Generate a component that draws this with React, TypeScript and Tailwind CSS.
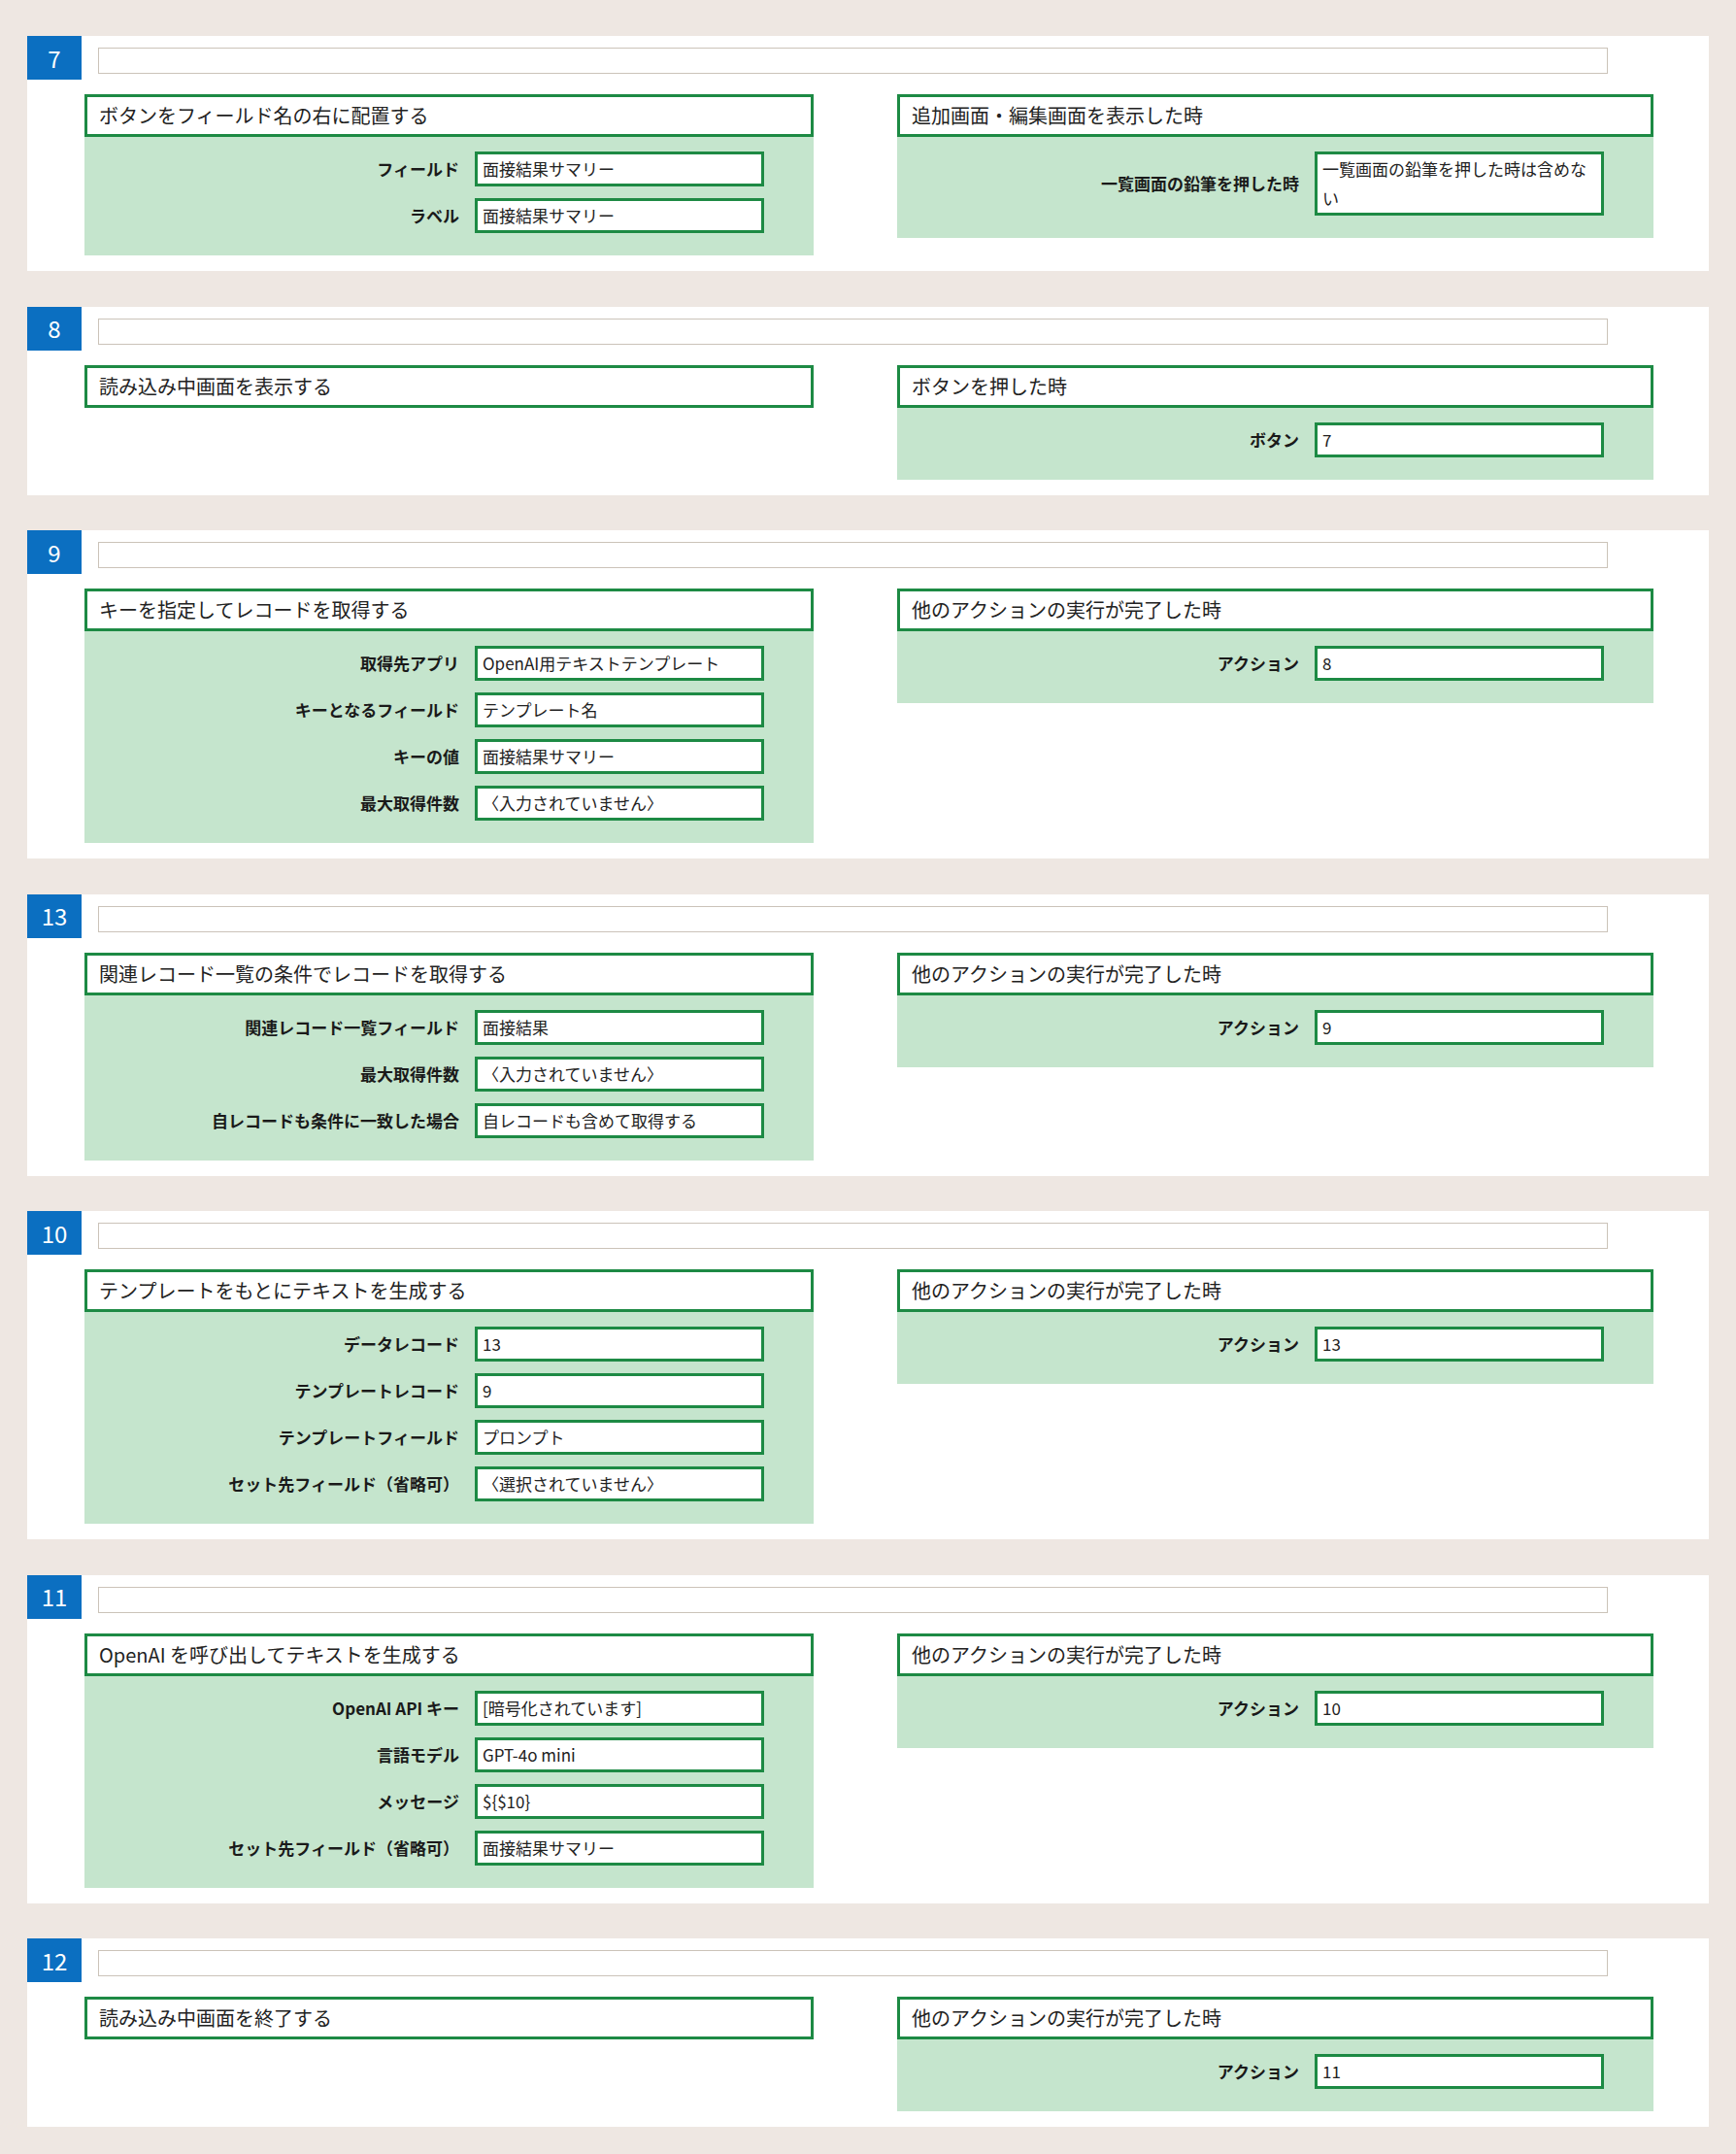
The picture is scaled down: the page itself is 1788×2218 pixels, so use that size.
import React from "react";

type Row = [string, string];
type Col = { title: string; rows: Row[] };
type Card = { n: string; left: Col; right: Col };

const cards: Card[] = [
  {
    n: "7",
    left: {
      title: "ボタンをフィールド名の右に配置する",
      rows: [
        ["フィールド", "面接結果サマリー"],
        ["ラベル", "面接結果サマリー"],
      ],
    },
    right: {
      title: "追加画面・編集画面を表示した時",
      rows: [["一覧画面の鉛筆を押した時", "一覧画面の鉛筆を押した時は含めない"]],
    },
  },
  {
    n: "8",
    left: { title: "読み込み中画面を表示する", rows: [] },
    right: { title: "ボタンを押した時", rows: [["ボタン", "7"]] },
  },
  {
    n: "9",
    left: {
      title: "キーを指定してレコードを取得する",
      rows: [
        ["取得先アプリ", "OpenAI用テキストテンプレート"],
        ["キーとなるフィールド", "テンプレート名"],
        ["キーの値", "面接結果サマリー"],
        ["最大取得件数", "〈入力されていません〉"],
      ],
    },
    right: { title: "他のアクションの実行が完了した時", rows: [["アクション", "8"]] },
  },
  {
    n: "13",
    left: {
      title: "関連レコード一覧の条件でレコードを取得する",
      rows: [
        ["関連レコード一覧フィールド", "面接結果"],
        ["最大取得件数", "〈入力されていません〉"],
        ["自レコードも条件に一致した場合", "自レコードも含めて取得する"],
      ],
    },
    right: { title: "他のアクションの実行が完了した時", rows: [["アクション", "9"]] },
  },
  {
    n: "10",
    left: {
      title: "テンプレートをもとにテキストを生成する",
      rows: [
        ["データレコード", "13"],
        ["テンプレートレコード", "9"],
        ["テンプレートフィールド", "プロンプト"],
        ["セット先フィールド（省略可）", "〈選択されていません〉"],
      ],
    },
    right: { title: "他のアクションの実行が完了した時", rows: [["アクション", "13"]] },
  },
  {
    n: "11",
    left: {
      title: "OpenAI を呼び出してテキストを生成する",
      rows: [
        ["OpenAI API キー", "[暗号化されています]"],
        ["言語モデル", "GPT-4o mini"],
        ["メッセージ", "${$10}"],
        ["セット先フィールド（省略可）", "面接結果サマリー"],
      ],
    },
    right: { title: "他のアクションの実行が完了した時", rows: [["アクション", "10"]] },
  },
  {
    n: "12",
    left: { title: "読み込み中画面を終了する", rows: [] },
    right: { title: "他のアクションの実行が完了した時", rows: [["アクション", "11"]] },
  },
];

function Column({ col, width }: { col: Col; width: string }) {
  return (
    <div className={`${width} flex flex-col`}>
      <div className="flex h-[44px] items-center border-[3px] border-[#1d8a44] bg-white pl-[12px] text-[20px] text-[#222]">
        {col.title}
      </div>
      {col.rows.length > 0 && (
        <div className="flex flex-col gap-[12px] bg-[#c5e5cd] pt-[15px] pb-[23px]">
          {col.rows.map(([label, value], i) => (
            <div key={i} className="flex items-center justify-end pr-[51px]">
              <div className="mr-[16px] text-right text-[17px] font-bold text-[#1a1a1a]">{label}</div>
              <div className="w-[298px] shrink-0 border-[3px] border-[#1d8a44] bg-white px-[5px] text-[17px] leading-[30px] text-[#222]">
                {value}
              </div>
            </div>
          ))}
        </div>
      )}
    </div>
  );
}

export default function App() {
  return (
    <div
      className="min-h-[2218px] w-[1788px] bg-[#eee7e2] px-[28px] pt-[37px] pb-[25px]"
      style={{ fontFamily: '"Noto Sans CJK JP", "Noto Sans", sans-serif' }}
    >
      <div className="flex flex-col gap-[36.5px]">
        {cards.map((c) => (
          <div key={c.n} className="flex flex-col bg-white pb-[16px]">
            <div className="flex items-start">
              <div className="flex h-[45px] w-[56px] items-center justify-center bg-[#0b6fc1] text-[24px] leading-none text-white">
                {c.n}
              </div>
              <div className="mt-[12px] ml-[17px] h-[27px] w-[1555px] border-[1.5px] border-[#cbc3b9] bg-white" />
            </div>
            <div className="mt-[15px] flex items-start gap-[86px] pl-[59px]">
              <Column col={c.left} width="w-[751px]" />
              <Column col={c.right} width="w-[779px]" />
            </div>
          </div>
        ))}
      </div>
    </div>
  );
}
